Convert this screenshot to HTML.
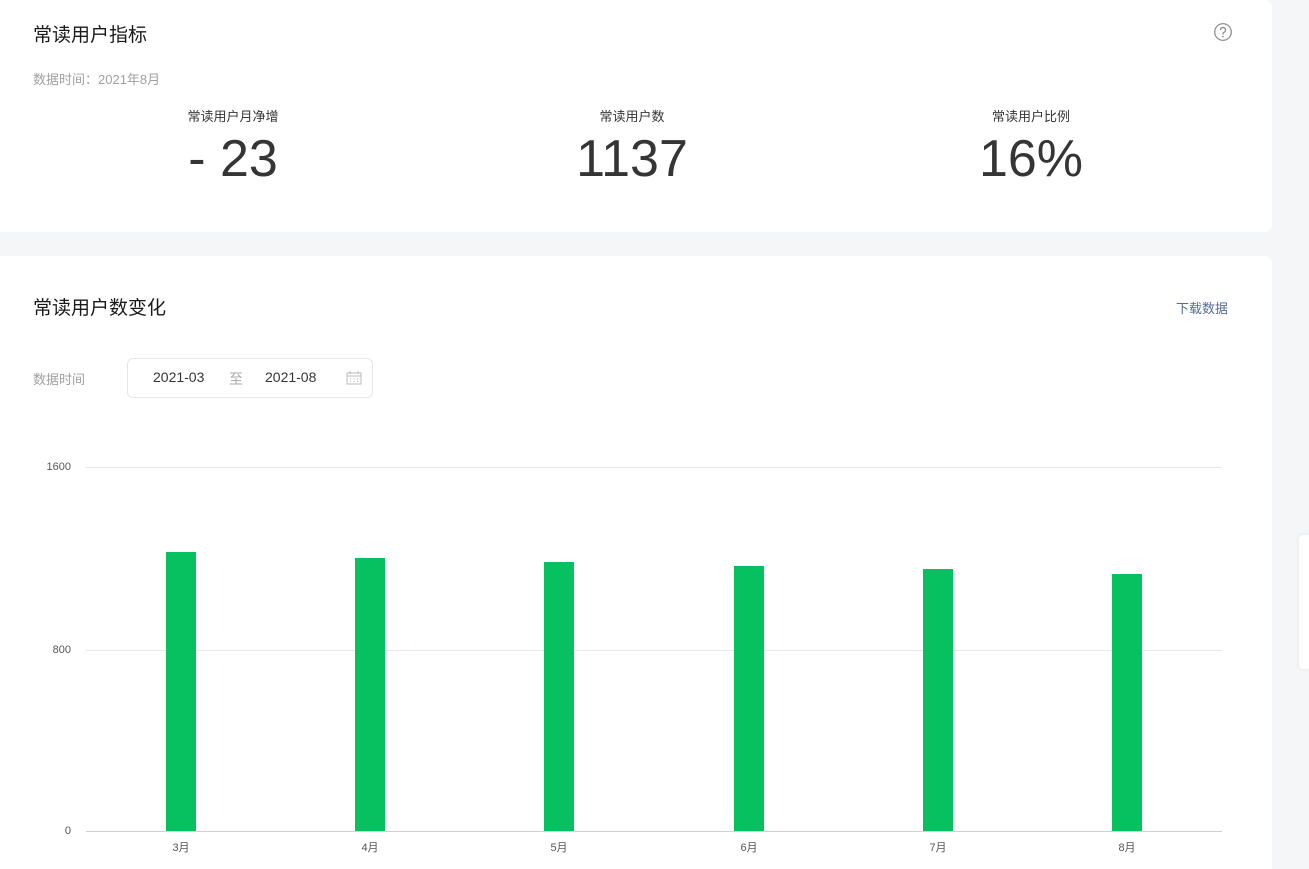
<!DOCTYPE html>
<html><head><meta charset="utf-8"><style>
*{margin:0;padding:0;box-sizing:border-box}
html,body{width:1309px;height:869px}
body{background:#f5f6f8;font-family:"Liberation Sans","Noto Sans CJK SC",sans-serif;position:relative;overflow:hidden;color:#353535}
.card{position:absolute;left:0;width:1272px;background:#fff;border-radius:0 8px 8px 0}
.abs{position:absolute}
.bar{position:absolute;width:30px;background:#07c160;height:auto}
.grid{position:absolute;left:86px;width:1136px;height:1px;background:#e7e7e7}
.yl{position:absolute;font-size:11px;color:#555;width:40px;text-align:right;left:31px}
.xl{position:absolute;font-size:11px;color:#555;top:839px;width:40px;text-align:center}
</style></head><body>
<div class="card" style="top:0;height:232px">
  <div class="abs" style="left:33px;top:20px;font-size:19px;color:#1a1a1a">常读用户指标</div>
  <svg class="abs" style="left:1213px;top:22px" width="20" height="20" viewBox="0 0 20 20"><circle cx="10" cy="10" r="8.3" fill="none" stroke="#888" stroke-width="1.2"/><path d="M7.5 8a2.5 2.5 0 1 1 3.5 2.3c-.7.3-1 .8-1 1.5v.8" fill="none" stroke="#888" stroke-width="1.2"/><circle cx="10" cy="14.6" r=".8" fill="#888"/></svg>
  <div class="abs" style="left:33px;top:69px;font-size:13px;color:#a0a0a0">数据时间：2021年8月</div>
  <div class="abs" style="left:133px;width:200px;text-align:center;top:106px;font-size:13px;color:#353535">常读用户月净增</div>
  <div class="abs" style="left:133px;width:200px;text-align:center;top:128px;font-size:52px;color:#353535;line-height:62px">- 23</div>
  <div class="abs" style="left:532px;width:200px;text-align:center;top:106px;font-size:13px">常读用户数</div>
  <div class="abs" style="left:532px;width:200px;text-align:center;top:128px;font-size:52px;line-height:62px">1137</div>
  <div class="abs" style="left:931px;width:200px;text-align:center;top:106px;font-size:13px">常读用户比例</div>
  <div class="abs" style="left:931px;width:200px;text-align:center;top:128px;font-size:52px;line-height:62px">16%</div>
</div>
<div class="card" style="top:256px;height:613px;border-radius:0 8px 0 0">
  <div class="abs" style="left:33px;top:37px;font-size:19px;color:#1a1a1a">常读用户数变化</div>
  <div class="abs" style="left:1176px;top:42px;font-size:13px;color:#576b95">下载数据</div>
  <div class="abs" style="left:33px;top:113px;font-size:13px;color:#a0a0a0">数据时间</div>
  <div class="abs" style="left:127px;top:102px;width:246px;height:40px;border:1px solid #e4e6ea;border-radius:6px;font-size:14px">
    <span class="abs" style="left:25px;top:10px;color:#353535">2021-03</span>
    <span class="abs" style="left:101px;top:10px;color:#aaa">至</span>
    <span class="abs" style="left:137px;top:10px;color:#353535">2021-08</span>
    <svg class="abs" style="left:218px;top:12px" width="16" height="14" viewBox="0 0 16 14"><rect x="1" y="2" width="14" height="11" fill="none" stroke="#bbb"/><path d="M1 5h14M4 0v3M12 0v3" stroke="#bbb"/><path d="M4 8h1M7.5 8h1M11 8h1M4 10.5h1M7.5 10.5h1M11 10.5h1" stroke="#bbb"/></svg>
  </div>
</div>
<div class="grid" style="top:467px"></div>
<div class="grid" style="top:650px"></div>
<div class="grid" style="top:831px;background:#d0d0d0"></div>
<div class="yl" style="top:461px">1600</div>
<div class="yl" style="top:644px">800</div>
<div class="yl" style="top:825px">0</div>
<div class="bar" style="left:166px;top:552px;height:279px"></div>
<div class="bar" style="left:355px;top:558px;height:273px"></div>
<div class="bar" style="left:544px;top:562px;height:269px"></div>
<div class="bar" style="left:734px;top:566px;height:265px"></div>
<div class="bar" style="left:923px;top:569px;height:262px"></div>
<div class="bar" style="left:1112px;top:574px;height:257px"></div>
<div class="xl" style="left:161px">3月</div>
<div class="xl" style="left:350px">4月</div>
<div class="xl" style="left:539px">5月</div>
<div class="xl" style="left:729px">6月</div>
<div class="xl" style="left:918px">7月</div>
<div class="xl" style="left:1107px">8月</div>
<div class="abs" style="left:1299px;top:535px;width:12px;height:134px;background:#fff;border-radius:4px 0 0 4px;box-shadow:0 0 4px rgba(0,0,0,.08)"></div>
</body></html>
